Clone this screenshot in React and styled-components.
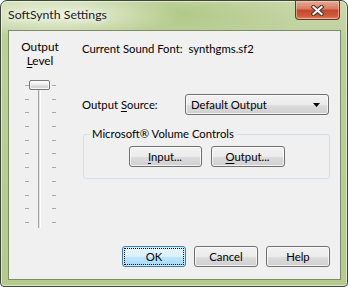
import styled, { createGlobalStyle } from "styled-components";

const GlobalStyle = createGlobalStyle`
  html, body { margin: 0; padding: 0; background: #ffffff; }
  body {
    font-family: Lato, "Segoe UI", sans-serif;
    font-size: 11.3px;
    color: #000;
  }
`;

const Window = styled.div`
  box-sizing: border-box;
  width: 348px;
  height: 287px;
  border: 1px solid #3e4638;
  border-radius: 7px 7px 4px 4px;
  padding: 0 6px 6px 7px;
  display: flex;
  flex-direction: column;
  background:
    radial-gradient(ellipse 120px 22px at 60px 14px, rgba(240, 246, 228, 0.85), rgba(240, 246, 228, 0) 100%),
    radial-gradient(ellipse 140px 30px at 175px 12px, rgba(168, 196, 120, 0.7), rgba(168, 196, 120, 0) 100%),
    linear-gradient(#cbdab0, #bccf99 40px, #b5c98f);
  box-shadow: inset 0 0 0 1px rgba(255, 255, 255, 0.55);
`;

const TitleBar = styled.div`
  height: 29px;
  display: flex;
  align-items: flex-start;
  justify-content: space-between;
`;

const Title = styled.span`
  margin-top: 6px;
  line-height: 16px;
  font-size: 12.3px;
  color: #1a1a1a;
  text-shadow: 0 0 6px rgba(255, 255, 255, 0.95), 0 0 10px rgba(255, 255, 255, 0.8);
`;

const CloseButton = styled.div`
  box-sizing: border-box;
  width: 45px;
  height: 19px;
  margin-right: 1px;
  border: 1px solid #6b3428;
  border-top: none;
  border-radius: 0 0 4px 4px;
  display: flex;
  align-items: center;
  justify-content: center;
  background: linear-gradient(#e8ab97, #d77a5f 45%, #c5472a 50%, #cf5d3d 85%, #e0896a);
  box-shadow: inset 0 0 0 1px rgba(255, 210, 190, 0.55);
`;

const Client = styled.div`
  flex: 1;
  border: 1px solid #7d8c66;
  background: #f0f0f0;
  display: grid;
  grid-template-columns: 62px 1fr;
  grid-template-rows: 1fr auto;
`;

const LevelColumn = styled.div`
  padding-top: 9px;
  display: flex;
  flex-direction: column;
  align-items: center;
`;

const LevelLabel = styled.div`
  line-height: 14px;
  font-size: 11.8px;
  text-align: center;
`;

const Mnemonic = styled.u`
  text-decoration: underline;
  text-underline-offset: 2px;
`;

const SliderBox = styled.div`
  position: relative;
  margin-top: 12px;
  width: 31px;
  height: 148px;
  display: flex;
  align-items: flex-start;
`;

const TickColumn = styled.div`
  margin-top: 5px;
  width: 4px;
  height: 138px;
  display: flex;
  flex-direction: column;
  justify-content: space-between;
`;

const Tick = styled.div`
  height: 1px;
  background: #a8a8a8;
`;

const Track = styled.div`
  box-sizing: border-box;
  margin: 9px 11px 0 9px;
  width: 3px;
  height: 139px;
  border-left: 1px solid #a3a3a3;
  border-right: 1px solid #ffffff;
  background: #e3e3e3;
`;

const Thumb = styled.div`
  position: absolute;
  top: 0;
  left: 4px;
  box-sizing: border-box;
  width: 21px;
  height: 10px;
  border: 1px solid #787878;
  border-radius: 2px;
  background: linear-gradient(#fbfbfb, #ececec 50%, #dcdcdc 51%, #d2d2d2);
  box-shadow: inset 0 0 0 1px rgba(255, 255, 255, 0.8);
`;

const Main = styled.div`
  padding: 10px 10px 0 11px;
  display: flex;
  flex-direction: column;
`;

const Line = styled.div`
  line-height: 16px;
  white-space: pre;
`;

const SourceRow = styled.div`
  margin-top: 37px;
  display: flex;
  align-items: center;
`;

const FieldLabel = styled.span`
  width: 103px;
  line-height: 16px;
`;

const Select = styled.div`
  box-sizing: border-box;
  width: 144px;
  height: 21px;
  padding: 0 8px 0 5px;
  display: flex;
  align-items: center;
  justify-content: space-between;
  border: 1px solid #707070;
  border-radius: 3px;
  background: linear-gradient(#f2f2f2, #ebebeb 50%, #dddddd 51%, #cfcfcf);
  box-shadow: inset 0 0 0 1px rgba(255, 255, 255, 0.7);
`;

const Group = styled.fieldset`
  margin: 11px 0 0 1px;
  padding: 4px 0 11px 0;
  border: 1px solid #d5dfe5;
  border-radius: 3px;
  min-inline-size: 0;
  display: flex;
  justify-content: center;
  gap: 9px;
`;

const Legend = styled.legend`
  margin-left: 6px;
  padding: 0 2px;
  line-height: 16px;
`;

const Button = styled.div`
  box-sizing: border-box;
  width: ${p => p.$w || 64}px;
  height: 21px;
  display: flex;
  align-items: center;
  justify-content: center;
  border: 1px solid ${p => (p.$default ? "#3c7fb1" : "#707070")};
  border-radius: 3px;
  background: ${p =>
    p.$default
      ? "linear-gradient(#eaf6fd, #d9f0fc 50%, #bee6fd 51%, #a7d9f5)"
      : "linear-gradient(#f2f2f2, #ebebeb 50%, #dddddd 51%, #cfcfcf)"};
  box-shadow: inset 0 0 0 1px ${p => (p.$default ? "rgba(200, 240, 255, 0.9)" : "rgba(255, 255, 255, 0.7)")};
  outline: ${p => (p.$default ? "1px dotted #000" : "none")};
  outline-offset: -3px;
  line-height: 16px;
`;

const Footer = styled.div`
  grid-column: 1 / span 2;
  padding: 0 10px 12px 0;
  display: flex;
  justify-content: flex-end;
  gap: 8px;
`;

const CloseGlyph = () => (
  <svg width="13" height="11" viewBox="0 0 13 11">
    <path d="M2.5 2 L10.5 9 M10.5 2 L2.5 9" stroke="#4a2a22" strokeWidth="4.2" strokeLinecap="square" />
    <path d="M2.5 2 L10.5 9 M10.5 2 L2.5 9" stroke="#ffffff" strokeWidth="2.2" strokeLinecap="square" />
  </svg>
);

const ArrowGlyph = () => (
  <svg width="7" height="4" viewBox="0 0 7 4">
    <path d="M0 0 H7 L3.5 4 Z" fill="#000" />
  </svg>
);

export default function App() {
  const ticks = Array.from({ length: 11 });
  return (
    <>
      <GlobalStyle />
      <Window>
        <TitleBar>
          <Title>SoftSynth Settings</Title>
          <CloseButton>
            <CloseGlyph />
          </CloseButton>
        </TitleBar>
        <Client>
          <LevelColumn>
            <LevelLabel>
              Output
              <br />
              <Mnemonic>L</Mnemonic>evel
            </LevelLabel>
            <SliderBox>
              <TickColumn>
                {ticks.map((_, i) => (
                  <Tick key={i} />
                ))}
              </TickColumn>
              <Track />
              <TickColumn>
                {ticks.map((_, i) => (
                  <Tick key={i} />
                ))}
              </TickColumn>
              <Thumb />
            </SliderBox>
          </LevelColumn>
          <Main>
            <Line>Current Sound Font:  synthgms.sf2</Line>
            <SourceRow>
              <FieldLabel>
                Output <Mnemonic>S</Mnemonic>ource:
              </FieldLabel>
              <Select>
                <span>Default Output</span>
                <ArrowGlyph />
              </Select>
            </SourceRow>
            <Group>
              <Legend>Microsoft® Volume Controls</Legend>
              <Button $w={73}>
                <span>
                  <Mnemonic>I</Mnemonic>nput...
                </span>
              </Button>
              <Button $w={74}>
                <span>
                  <Mnemonic>O</Mnemonic>utput...
                </span>
              </Button>
            </Group>
          </Main>
          <Footer>
            <Button $default>OK</Button>
            <Button>Cancel</Button>
            <Button>Help</Button>
          </Footer>
        </Client>
      </Window>
    </>
  );
}
